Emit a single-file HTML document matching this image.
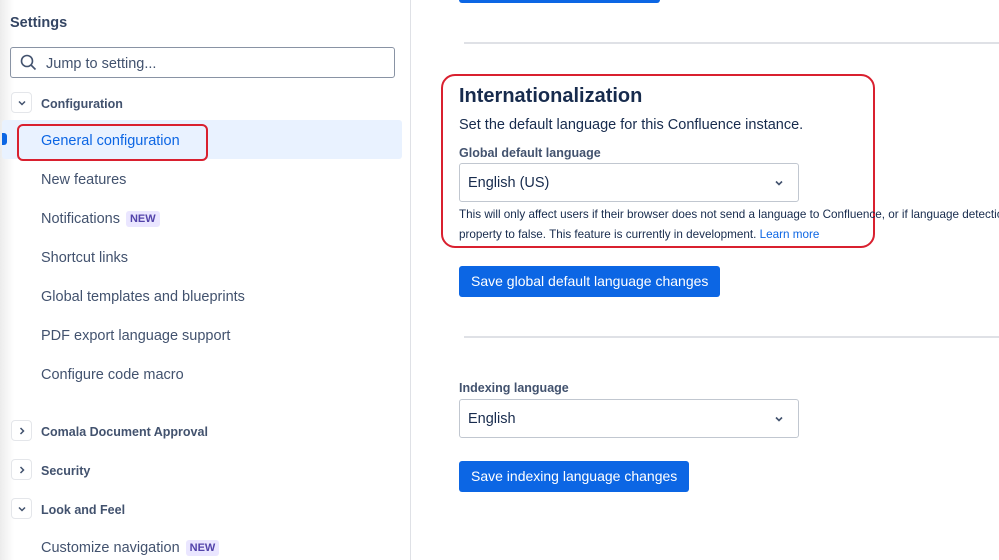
<!DOCTYPE html>
<html><head><style>
*{margin:0;padding:0;box-sizing:border-box}
body{width:999px;height:560px;overflow:hidden;background:#fff;font-family:"Liberation Sans",sans-serif;color:#172b4d;position:relative}
.a{position:absolute;white-space:nowrap}
.side{position:absolute;left:0;top:0;width:411px;height:560px;border-right:1px solid #dfe1e6;background:linear-gradient(90deg,#ececec 0,#fff 14px)}
.item{position:absolute;left:41px;font-size:14.5px;color:#42526e}
.grp{position:absolute;left:41px;font-size:12.5px;font-weight:bold;color:#42526e}
.chev{position:absolute;left:11px;width:21px;height:21px;border:1px solid #e4e6ea;border-radius:4px;background:#fff}
.new{display:inline-block;background:#eae6ff;color:#5243aa;font-size:11px;font-weight:bold;padding:2px 4px;border-radius:3px;margin-left:6px;vertical-align:1px}
.btn{position:absolute;left:459px;height:31px;background:#0c66e4;color:#fff;font-size:14px;border-radius:3px;padding:0 12px;line-height:31px}
.sel{position:absolute;left:459px;width:340px;height:39px;border:1px solid #c1c7d0;border-radius:3px;font-size:14.5px;padding-left:8px;line-height:39px}
.hr{position:absolute;left:464px;right:0;height:2px;background:#dfe1e6}
</style></head><body>
<div class="side"></div>
<div class="a" style="left:10px;top:15px;font-size:14.5px;font-weight:bold;color:#344563">Settings</div>
<div class="a" style="left:10px;top:47px;width:385px;height:31px;border:1px solid #8993a4;border-radius:3px"></div>
<svg class="a" style="left:20px;top:54px" width="17" height="17" viewBox="0 0 17 17"><circle cx="7" cy="7" r="5.5" fill="none" stroke="#42526e" stroke-width="1.6"/><path d="M11 11l4.5 4.5" stroke="#42526e" stroke-width="1.6"/></svg>
<div class="a" style="left:46px;top:56px;font-size:14.5px;color:#42526e">Jump to setting...</div>
<div class="chev" style="top:92px"></div><svg class="a" style="left:17px;top:98px" width="10" height="10"><path d="M2 3.5l3 3 3-3" fill="none" stroke="#42526e" stroke-width="1.5"/></svg>
<div class="grp" style="top:97px">Configuration</div>
<div class="a" style="left:2px;top:120px;width:400px;height:39px;background:#e9f2ff;border-radius:3px"></div>
<div class="a" style="left:2px;top:133px;width:5px;height:12px;background:#0c66e4;border-radius:0 3px 3px 0"></div>
<div class="a" style="left:17px;top:124px;width:191px;height:37px;border:2.5px solid #d9202f;border-radius:6px"></div>
<div class="item" style="top:133px;color:#0c66e4">General configuration</div>
<div class="item" style="top:172px">New features</div>
<div class="item" style="top:211px">Notifications<span class="new">NEW</span></div>
<div class="item" style="top:250px">Shortcut links</div>
<div class="item" style="top:289px">Global templates and blueprints</div>
<div class="item" style="top:328px">PDF export language support</div>
<div class="item" style="top:367px">Configure code macro</div>
<div class="chev" style="top:420px"></div><svg class="a" style="left:17px;top:426px" width="10" height="10"><path d="M3.5 2l3 3-3 3" fill="none" stroke="#42526e" stroke-width="1.5"/></svg>
<div class="grp" style="top:425px">Comala Document Approval</div>
<div class="chev" style="top:459px"></div><svg class="a" style="left:17px;top:465px" width="10" height="10"><path d="M3.5 2l3 3-3 3" fill="none" stroke="#42526e" stroke-width="1.5"/></svg>
<div class="grp" style="top:464px">Security</div>
<div class="chev" style="top:498px"></div><svg class="a" style="left:17px;top:504px" width="10" height="10"><path d="M2 3.5l3 3 3-3" fill="none" stroke="#42526e" stroke-width="1.5"/></svg>
<div class="grp" style="top:503px">Look and Feel</div>
<div class="item" style="top:540px">Customize navigation<span class="new">NEW</span></div>

<div class="a" style="left:459px;top:0;width:201px;height:3px;background:#0c66e4;border-radius:0 0 3px 3px"></div>
<div class="hr" style="top:42px"></div>
<div class="a" style="left:441px;top:74px;width:434px;height:174px;border:2.5px solid #d9202f;border-radius:14px"></div>
<div class="a" style="left:459px;top:85px;font-size:20px;font-weight:bold;color:#172b4d">Internationalization</div>
<div class="a" style="left:459px;top:117px;font-size:14.5px;color:#172b4d">Set the default language for this Confluence instance.</div>
<div class="a" style="left:459px;top:146px;font-size:12.5px;font-weight:bold;color:#42526e">Global default language</div>
<div class="sel" style="top:163px">English (US)</div>
<svg class="a" style="left:774px;top:178px" width="10" height="10"><path d="M2 3.5l3 3 3-3" fill="none" stroke="#42526e" stroke-width="1.6"/></svg>
<div class="a" style="left:459px;top:208px;font-size:11.7px;color:#172b4d">This will only affect users if their browser does not send a language to Confluence, or if language detection</div>
<div class="a" style="left:459px;top:228px;font-size:11.7px;color:#172b4d">property to false. This feature is currently in development. <span style="color:#0c66e4">Learn more</span></div>
<div class="btn" style="top:266px">Save global default language changes</div>
<div class="hr" style="top:336px"></div>
<div class="a" style="left:459px;top:381px;font-size:12.5px;font-weight:bold;color:#42526e">Indexing language</div>
<div class="sel" style="top:399px">English</div>
<svg class="a" style="left:774px;top:414px" width="10" height="10"><path d="M2 3.5l3 3 3-3" fill="none" stroke="#42526e" stroke-width="1.6"/></svg>
<div class="btn" style="top:461px">Save indexing language changes</div>
</body></html>
